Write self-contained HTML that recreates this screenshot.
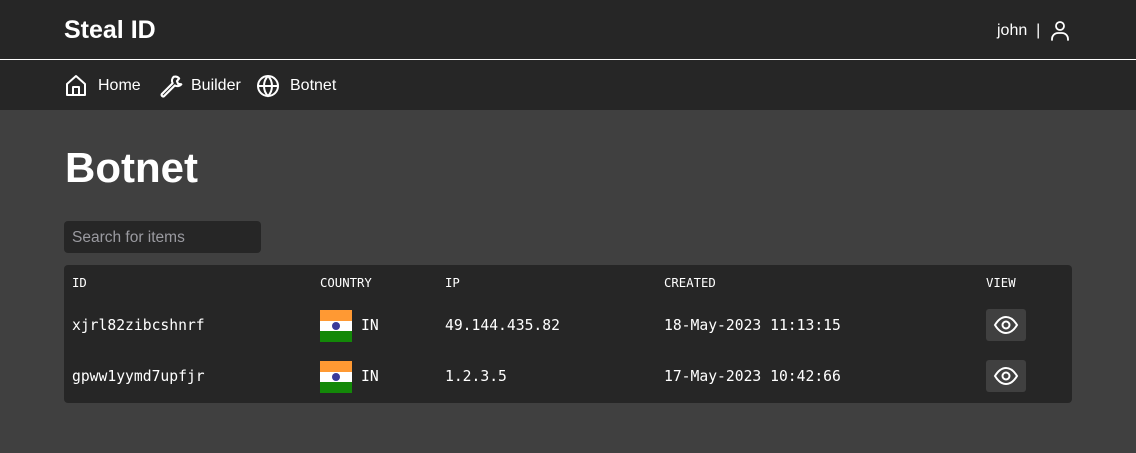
<!DOCTYPE html>
<html><head><meta charset="utf-8"><style>
*{margin:0;padding:0;box-sizing:border-box}
body{width:1136px;height:453px;background:#404040;font-family:"Liberation Sans","DejaVu Sans",sans-serif;color:#fff;overflow:hidden;position:relative}
.top{position:absolute;left:0;top:0;width:1136px;height:59px;background:#262626}
.line{position:absolute;left:0;top:59px;width:1136px;height:1px;background:#fff}
.nav{position:absolute;left:0;top:60px;width:1136px;height:50px;background:#262626}
.abs{position:absolute}
.mono{font-family:"DejaVu Sans Mono","Liberation Mono",monospace}
.tbl{position:absolute;left:64px;top:265px;width:1008px;height:138px;background:#262626;border-radius:4px}
.th{position:absolute;top:11px;font-size:12.3px}
.td{position:absolute;font-size:14.7px}
.flag{position:absolute;width:32px;height:32px}
.btn{position:absolute;left:922px;width:40px;height:32px;background:#404040;border-radius:3px}
</style></head><body>
<div class="top"></div><div class="line"></div><div class="nav"></div>
<div class="abs" style="left:64px;top:16px;font-size:25px;font-weight:bold">Steal ID</div>
<div class="abs" style="left:997px;top:22px;font-size:16px">john &nbsp;|</div>
<svg class="abs" style="left:1048px;top:19px" width="24" height="24" viewBox="0 0 24 24" fill="none" stroke="#fff" stroke-width="1.8" stroke-linecap="round"><circle cx="12" cy="7" r="4"/><path d="M4 21v-1a6 6 0 0 1 6-6h4a6 6 0 0 1 6 6v1"/></svg>
<svg class="abs" style="left:64px;top:74px" width="24" height="24" viewBox="0 0 24 24" fill="none" stroke="#fff" stroke-width="2" stroke-linejoin="round"><path d="M3 10L12 2l9 8v11H3z M9 21v-8h6v8"/></svg>
<div class="abs" style="left:98px;top:77px;font-size:16px">Home</div>
<svg class="abs" style="left:158px;top:73px" width="26" height="26" viewBox="0 0 24 24" fill="none" stroke="#fff" stroke-width="2" stroke-linejoin="round"><path d="M14.5 3.5a5 5 0 0 0-1 6L3.5 19.5a1.5 1.5 0 0 0 2 2l10-10a5 5 0 0 0 6-1l-3-0.5-1-2.5 2-2.5a5 5 0 0 0-5-1.5z"/></svg>
<div class="abs" style="left:191px;top:77px;font-size:16px">Builder</div>
<svg class="abs" style="left:256px;top:74px" width="24" height="24" viewBox="0 0 24 24" fill="none" stroke="#fff" stroke-width="2"><circle cx="12" cy="12" r="10"/><path d="M2 12h20M12 2c-3 3-4 6-4 10s1 7 4 10c3-3 4-6 4-10s-1-7-4-10"/></svg>
<div class="abs" style="left:290px;top:77px;font-size:16px">Botnet</div>
<div class="abs" style="left:65px;top:144px;font-size:42px;font-weight:bold">Botnet</div>
<div class="abs" style="left:64px;top:221px;width:197px;height:32px;background:#262626;border-radius:4px;padding:8px 8px;font-size:15.5px;color:#9a9aa0">Search for items</div>
<div class="tbl mono">
<div class="th" style="left:8px">ID</div><div class="th" style="left:256px">COUNTRY</div><div class="th" style="left:381px">IP</div><div class="th" style="left:600px">CREATED</div><div class="th" style="left:922px">VIEW</div>
<div class="td" style="left:8px;top:52px">xjrl82zibcshnrf</div>
<svg class="flag" style="left:256px;top:45px" viewBox="0 0 32 32"><rect width="32" height="11" fill="#ff9933"/><rect y="11" width="32" height="11" fill="#fff"/><rect y="21" width="32" height="11" fill="#138808"/><circle cx="16" cy="16" r="4" fill="#3a3a9a"/></svg>
<div class="td" style="left:297px;top:52px">IN</div>
<div class="td" style="left:381px;top:52px">49.144.435.82</div>
<div class="td" style="left:600px;top:52px">18-May-2023 11:13:15</div>
<div class="btn" style="top:44px"><svg width="40" height="32" viewBox="0 0 40 32" fill="none" stroke="#fff" stroke-width="2"><path d="M9 16c3-5 7-8 11-8s8 3 11 8c-3 5-7 8-11 8s-8-3-11-8z"/><circle cx="20" cy="16" r="3.5"/></svg></div>
<div class="td" style="left:8px;top:103px">gpww1yymd7upfjr</div>
<svg class="flag" style="left:256px;top:96px" viewBox="0 0 32 32"><rect width="32" height="11" fill="#ff9933"/><rect y="11" width="32" height="11" fill="#fff"/><rect y="21" width="32" height="11" fill="#138808"/><circle cx="16" cy="16" r="4" fill="#3a3a9a"/></svg>
<div class="td" style="left:297px;top:103px">IN</div>
<div class="td" style="left:381px;top:103px">1.2.3.5</div>
<div class="td" style="left:600px;top:103px">17-May-2023 10:42:66</div>
<div class="btn" style="top:95px"><svg width="40" height="32" viewBox="0 0 40 32" fill="none" stroke="#fff" stroke-width="2"><path d="M9 16c3-5 7-8 11-8s8 3 11 8c-3 5-7 8-11 8s-8-3-11-8z"/><circle cx="20" cy="16" r="3.5"/></svg></div>
</div>
</body></html>
